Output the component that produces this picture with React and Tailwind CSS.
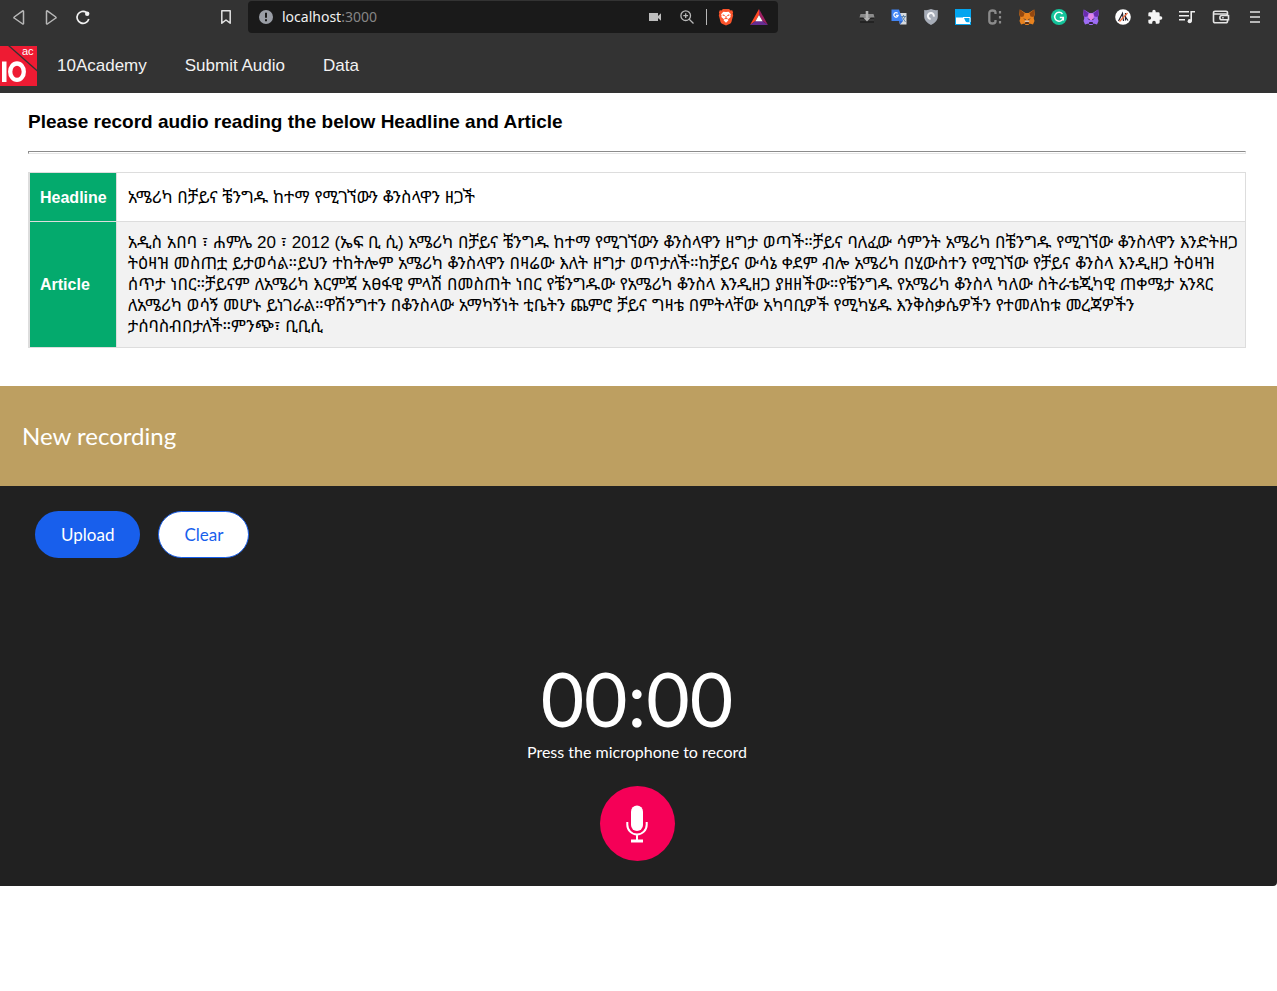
import React from "react";

const ICON = "block h-4 w-4";

function BackIcon() {
  return (
    <svg viewBox="0 0 16 16" className={ICON} fill="none" stroke="#b8b8b8" strokeWidth="1.5" strokeLinejoin="round">
      <path d="M12.5 2.3v12.4a.5.5 0 0 1-.8.3L3.2 9a.6.6 0 0 1 0-1l8.5-6.1a.5.5 0 0 1 .8.4z" />
    </svg>
  );
}

function ForwardIcon() {
  return (
    <svg viewBox="0 0 16 16" className={ICON} fill="none" stroke="#b8b8b8" strokeWidth="1.5" strokeLinejoin="round">
      <path d="M3.5 2.3v12.4a.5.5 0 0 0 .8.3L12.8 9a.6.6 0 0 0 0-1L4.3 1.9a.5.5 0 0 0-.8.4z" />
    </svg>
  );
}

function ReloadIcon() {
  return (
    <svg viewBox="0 0 16 16" className={ICON} fill="none">
      <path d="M11.5 3.4A6 6 0 1 0 13.8 10" stroke="#f2f2f2" strokeWidth="1.7" />
      <circle cx="12.200" cy="4.700" r="2.200" fill="#f2f2f2" />
    </svg>
  );
}

function BookmarkIcon() {
  return (
    <svg viewBox="0 0 16 16" className={ICON} fill="none" stroke="#e2e2e2" strokeWidth="1.5" strokeLinejoin="round">
      <path d="M3.8 1.800h8.400v12.400L8 11l-4.200 3.200z" />
    </svg>
  );
}

function InfoIcon() {
  return (
    <svg viewBox="0 0 16 16" className={ICON}>
      <circle cx="8" cy="8" r="7" fill="#9a9ea6" />
      <path d="M8 3.8v5M8 10.2v2" stroke="#1a1a1a" strokeWidth="2" />
    </svg>
  );
}

function CameraIcon() {
  return (
    <svg viewBox="0 0 16 16" className={ICON} fill="#bdbdbd">
      <path d="M2 4h9v3l3-2.700v7.400L11 9v3H2z" />
    </svg>
  );
}

function ZoomIcon() {
  return (
    <svg viewBox="0 0 16 16" className={ICON} fill="none" stroke="#b8b8b8" strokeWidth="1.300">
      <circle cx="6.700" cy="6.700" r="4.800" />
      <path d="M10.200 10.200l4.300 4.300M4.300 6.700h4.800M6.700 4.300v4.800" />
    </svg>
  );
}

function BraveIcon() {
  return (
    <svg viewBox="0 0 18 20" className="block h-[18px] w-4">
      <path d="M5.500 1h7l1.500 1.600 2-.1 1 2.500-.5 1.300.6 1.800-2 7.400c-.3.900-.8 1.400-1.600 2L9 19.500l-4.500-2c-.8-.6-1.300-1.100-1.600-2L.9 8.100l.6-1.800L1 5l1-2.500 2 .1z" fill="#fb542b" />
      <path d="M9 4.500l3-.5 2.500 3-.6 1.500.4 1.500-3 2.500.3 1.500L9 16.500 6.400 14l.3-1.500-3-2.500.4-1.500L3.500 7 6 4z" fill="#fff" />
      <path d="M5.200 7.500l2.300 1M12.800 7.500l-2.300 1M9 9v2.500M7.300 12.200L9 11.200l1.700 1" stroke="#fb542b" strokeWidth="1.200" fill="none" />
    </svg>
  );
}

function RewardsIcon() {
  return (
    <svg viewBox="0 0 18 16" className="block h-4 w-[18px]">
      <path d="M9 0v6L5.500 12 0 16z" fill="#ff4724" />
      <path d="M9 0l9 16-5.500-4L9 6z" fill="#9e1f63" />
      <path d="M0 16l5.500-4h7L18 16z" fill="#662d91" />
      <path d="M9 6l3.600 6.200H5.400z" fill="#fff" />
    </svg>
  );
}

function DownloadBoxIcon() {
  return (
    <svg viewBox="0 0 16 16" className={ICON}>
      <path d="M1.500 5h13l1 3.500H.5z" fill="#8c8c8c" />
      <path d="M1 8.500h14v5.500H1z" fill="#232323" />
      <path d="M1 8.500h14M1 11h14" stroke="#5c5c5c" strokeWidth=".8" />
      <path d="M6.700 2h2.600v6.500h2.400L8 12.500 4.300 8.500h2.400z" fill="#b4b4b4" />
    </svg>
  );
}

function TranslateIcon() {
  return (
    <svg viewBox="0 0 16 16" className={ICON}>
      <path d="M6 4h9.500v11.500H9z" fill="#d7dadd" />
      <path d="M10 7.500h5M12.500 6v1.500M11 8l3.500 5M14 8l-3 4" stroke="#6688a8" strokeWidth="1" />
      <path d="M.5.500H8L12 12H.5z" fill="#4285f4" />
      <path d="M8 12h4l-3 3.500z" fill="#3068ce" />
      <path d="M6.700 4.400a2.200 2.200 0 1 0 .5 2H5" stroke="#fff" strokeWidth="1.200" fill="none" />
    </svg>
  );
}

function ShieldIcon() {
  return (
    <svg viewBox="0 0 16 16" className={ICON}>
      <path d="M1.200 1Q5 1.500 8 0q3 1.500 6.800 1v7q0 4.500-6.800 8-6.800-3.500-6.800-8z" fill="#a7adb8" />
      <path d="M7.600 10A3 3 0 1 1 10.800 7.600" fill="none" stroke="#f5f6f8" strokeWidth="2" />
    </svg>
  );
}

function TabBlockIcon() {
  return (
    <svg viewBox="0 0 16 16" className={ICON}>
      <path d="M0 0h16v16H0z" fill="#03a5ef" />
      <path d="M1 8.500h7c2 0 1.800 4.800 4 4.800h3V15H1z" fill="#fff" />
      <path d="M8 8.500h7V13" fill="none" stroke="#fff" strokeWidth="1" />
    </svg>
  );
}

function CodeIcon() {
  return (
    <svg viewBox="0 0 16 16" className={ICON} fill="none" stroke="#8b8b8b">
      <path d="M8.500 5V3.700C8.500 2.200 7.500 1.500 5.500 1.500S2.300 2.300 2.300 4v8c0 1.700 1 2.500 3.200 2.500s3-.8 3-2.300V11" strokeWidth="2.300" />
      <path d="M13 2v2.500M13 7v2.500M13 12v2.500" strokeWidth="2.200" />
    </svg>
  );
}

function FoxOrangeIcon() {
  return (
    <svg viewBox="0 0 16 16" className={ICON}>
      <path d="M.8.500L6.500 4h3L15.200.500l.5 5-1 3.500.8 3-1.500 3.500-3.500-1L9.500 16h-3L5.500 14.500l-3.500 1L.5 12l.8-3-1-3.500z" fill="#e8821e" />
      <path d="M.8.500L5.500 4.300 4.500 7.500 1.500 8 .5 5.500zM15.200.500L10.500 4.300l1 3.200 3 .5 1-2.500z" fill="#944810" />
      <path d="M4 9.500l2.500.5.500 1.200zM12 9.500L9.500 10 9 11.200z" fill="#313840" />
      <path d="M6.300 13h3.400l.3 2H6z" fill="#5a3018" />
      <path d="M5.500 12l1-.5h3l1 .5-.5 1H6z" fill="#d7c2b3" />
    </svg>
  );
}

function FoxPurpleIcon() {
  return (
    <svg viewBox="0 0 16 16" className={ICON}>
      <path d="M.8.500L6.500 4h3L15.200.500l.5 5-1 3.500.8 3-1.500 3.500-3.500-1L9.500 16h-3L5.500 14.500l-3.500 1L.5 12l.8-3-1-3.500z" fill="#9d6cf5" />
      <path d="M.8.500L5.500 4.300 4.500 7.500 1.500 8 .5 5.500zM15.200.500L10.500 4.300l1 3.200 3 .5 1-2.500z" fill="#6a2bad" />
      <path d="M6 4.500h4l1 3-1.500 3.500h-3L5 7.500z" fill="#e285e6" />
      <path d="M4 9.500l2.500.5.500 1.200zM12 9.500L9.500 10 9 11.200zM6.300 13h3.400l.3 2H6z" fill="#30203f" />
    </svg>
  );
}

function GrammarIcon() {
  return (
    <svg viewBox="0 0 16 16" className={ICON}>
      <circle cx="8" cy="8" r="8" fill="#15c39a" />
      <path d="M11.500 5A4.400 4.400 0 1 0 12.300 9M8.800 8.600h3.500v2.800" stroke="#fff" strokeWidth="1.500" fill="none" />
    </svg>
  );
}

function AxeIcon() {
  return (
    <svg viewBox="0 0 16 16" className={ICON}>
      <circle cx="8" cy="8" r="7.800" fill="#fff" />
      <path d="M3.500 12L7.500 4.500 8.500 12M10.500 4v7.500M10.500 8l2.500 3.500" stroke="#22222e" strokeWidth="1.200" fill="none" />
      <path d="M4.500 12.500L12.500 4" stroke="#ee6b3b" strokeWidth="1.200" />
    </svg>
  );
}

function PuzzleIcon() {
  return (
    <svg viewBox="0 0 24 24" className="block h-4 w-4" fill="#f5f5f5">
      <path d="M20.500 11H19V7a2 2 0 0 0-2-2h-4V3.500a2.500 2.500 0 0 0-5 0V5H4a2 2 0 0 0-2 2v3.800h1.500a2.700 2.700 0 0 1 0 5.400H2V20a2 2 0 0 0 2 2h3.800v-1.500a2.700 2.700 0 0 1 5.400 0V22H17a2 2 0 0 0 2-2v-4h1.500a2.500 2.500 0 0 0 0-5z" />
    </svg>
  );
}

function PlaylistIcon() {
  return (
    <svg viewBox="0 0 18 16" className="block h-4 w-[18px]" fill="none" stroke="#eee" strokeWidth="1.600">
      <path d="M1 2.800h10M1 6.800h10M1 10.800h6M13.200 12.200V2.800H17" />
      <circle cx="11.700" cy="12.200" r="2.100" fill="#eee" stroke="none" />
    </svg>
  );
}

function WalletIcon() {
  return (
    <svg viewBox="0 0 18 16" className="block h-4 w-[18px]" fill="none" stroke="#e4e4e4" strokeWidth="1.600">
      <path d="M15.500 5V3.700A1.500 1.500 0 0 0 14 2.200H3a1.500 1.500 0 0 0-1.500 1.500v8.600A1.500 1.500 0 0 0 3 13.800h11a1.500 1.500 0 0 0 1.500-1.500V11M1.500 5H14a1.500 1.500 0 0 1 1.500 1.500" />
      <path d="M10 6.500h6.500v4.300H10a2.100 2.100 0 0 1 0-4.300z" />
      <path d="M10.200 8.700h1.500" />
    </svg>
  );
}

function MenuIcon() {
  return (
    <svg viewBox="0 0 16 16" className={ICON} stroke="#e4e4e4" strokeWidth="1.600">
      <path d="M3 3h10M3 8h10M3 13h10" />
    </svg>
  );
}

function MicIcon() {
  return (
    <svg viewBox="0 0 22 38" className="block h-[38px] w-[22px]">
      <rect x="5" y="0.500" width="12" height="25.500" rx="6" fill="#fff" />
      <path d="M1.300 17v2.800a9.700 9.700 0 0 0 19.400 0V17M11 29v6" stroke="#fff" strokeWidth="2" fill="none" />
      <path d="M5 34.500h12V37.500H5z" fill="#fff" />
    </svg>
  );
}

function Logo() {
  return (
    <svg viewBox="0 0 37 40" className="block h-10 w-[37px]" role="img" aria-label="10 Academy">
      <path d="M0 0h37v40H0z" fill="#ee1b33" />
      <path d="M8.500-.5L37.500 25" stroke="#333" strokeWidth="1.300" />
      <text x="22" y="9" fill="#fff" fontSize="11" className="leading-none [font-family:'Liberation_Sans',sans-serif]">ac</text>
      <path d="M2 15.500h4.500V36H2z" fill="#fff" />
      <ellipse cx="17" cy="25.700" rx="6.800" ry="8.200" fill="none" stroke="#fff" strokeWidth="4.300" />
    </svg>
  );
}

const extensions = [
  ["Download helper", DownloadBoxIcon],
  ["Translate", TranslateIcon],
  ["Privacy shield", ShieldIcon],
  ["Tab manager", TabBlockIcon],
  ["Code tools", CodeIcon],
  ["Wallet", FoxOrangeIcon],
  ["Grammar", GrammarIcon],
  ["Wallet beta", FoxPurpleIcon],
  ["Accessibility", AxeIcon],
  ["Extensions", PuzzleIcon],
  ["Media", PlaylistIcon],
];

function ToolButton({ label, wide, children }) {
  return (
    <button type="button" aria-label={label} className={`flex h-8 shrink-0 items-center justify-center ${wide ? "w-[34px]" : "w-8"}`}>
      {children}
    </button>
  );
}

function BrowserBar() {
  return (
    <div className="flex h-[38px] items-start justify-between bg-[#333333] pt-px pr-[5px] pl-[3px]">
      <div className="flex items-center">
        <ToolButton label="Back"><BackIcon /></ToolButton>
        <ToolButton label="Forward"><ForwardIcon /></ToolButton>
        <ToolButton label="Reload"><ReloadIcon /></ToolButton>
      </div>
      <div className="mr-[73px] ml-auto flex items-center gap-1.5">
        <ToolButton label="Bookmark this page"><BookmarkIcon /></ToolButton>
        <div className="flex h-8 w-[530px] items-center rounded bg-[#1a1a1a] pl-2.5">
          <InfoIcon />
          <div className="ml-2 flex-1 text-sm text-[#f0f0f0] [font-family:'Noto_Sans',sans-serif]">
            localhost<span className="text-[#858585]">:3000</span>
          </div>
          <ToolButton label="Camera"><CameraIcon /></ToolButton>
          <ToolButton label="Zoom"><ZoomIcon /></ToolButton>
          <div className="mx-[3px] h-4 w-px bg-[#b8b8b8]" />
          <ToolButton label="Shields"><BraveIcon /></ToolButton>
          <ToolButton label="Rewards" wide><RewardsIcon /></ToolButton>
          <div className="w-0.5" />
        </div>
      </div>
      <div className="flex items-center gap-px">
        <div className="flex items-center">
          {extensions.map(([label, Icon]) => (
            <ToolButton key={label} label={label}><Icon /></ToolButton>
          ))}
        </div>
        <div className="flex items-center">
          <ToolButton label="Crypto wallet" wide><WalletIcon /></ToolButton>
          <ToolButton label="Menu" wide><MenuIcon /></ToolButton>
        </div>
      </div>
    </div>
  );
}

function NavBar() {
  return (
    <nav className="flex h-[55px] items-center bg-[#333333] text-[17px] leading-5 text-[#f2f2f2]">
      <Logo />
      <div className="flex gap-[38px] pl-5">
        <a href="#home">10Academy</a>
        <a href="#submit">Submit Audio</a>
        <a href="#data">Data</a>
      </div>
    </nav>
  );
}

const headline = "አሜሪካ በቻይና ቼንግዱ ከተማ የሚገኘውን ቆንስላዋን ዘጋች";
const articleLines = [
  "አዲስ አበባ ፣ ሐምሌ 20 ፣ 2012 (ኤፍ ቢ ሲ) አሜሪካ በቻይና ቼንግዱ ከተማ የሚገኘውን ቆንስላዋን ዘግታ ወጣች።ቻይና ባለፈው ሳምንት አሜሪካ በቼንግዱ የሚገኘው ቆንስላዋን እንድትዘጋ",
  "ትዕዛዝ መስጠቷ ይታወሳል።ይህን ተከትሎም አሜሪካ ቆንስላዋን በዛሬው እለት ዘግታ ወጥታለች።ከቻይና ውሳኔ ቀደም ብሎ አሜሪካ በሂውስተን የሚገኘው የቻይና ቆንስላ እንዲዘጋ ትዕዛዝ",
  "ሰጥታ ነበር።ቻይናም ለአሜሪካ እርምጃ አፀፋዊ ምላሽ በመስጠት ነበር የቼንግዱው የአሜሪካ ቆንስላ እንዲዘጋ ያዘዘችው።የቼንግዱ የአሜሪካ ቆንስላ ካለው ስትራቴጂካዊ ጠቀሜታ አንጻር",
  "ለአሜሪካ ወሳኝ መሆኑ ይነገራል።ዋሽንግተን በቆንስላው አማካኝነት ቲቤትን ጨምሮ ቻይና ግዛቴ በምትላቸው አካባቢዎች የሚካሄዱ እንቅስቃሴዎችን የተመለከቱ መረጃዎችን",
  "ታሰባስብበታለች።ምንጭ፣ ቢቢሲ",
];

function Prompt() {
  return (
    <main className="pt-[17px] pr-[31px] pb-[38px] pl-7">
      <h1 className="text-[19px] leading-6 font-bold">Please record audio reading the below Headline and Article</h1>
      <hr className="mt-[17px] h-[3px] border border-t-[#8c8c8c] border-r-[#e6e6e6] border-b-[#e6e6e6] border-l-[#8c8c8c]" />
      <table className="mt-[18px] w-full border-collapse border border-l-2 border-[#dddddd] text-base leading-[21px] [font-family:'Liberation_Sans','Noto_Sans_Ethiopic','Abyssinica_SIL',sans-serif]">
        <tbody>
          <tr className="h-[49px] border-b border-[#dddddd]">
            <th scope="row" className="w-[86px] border-r border-[#dddddd] bg-[#04aa6d] pr-[9px] pl-2.5 text-left font-bold text-white">Headline</th>
            <td className="pr-1 pl-[11px] text-[17px] leading-[21px]">{headline}</td>
          </tr>
          <tr className="bg-[#f2f2f2]">
            <th scope="row" className="border-r border-[#dddddd] bg-[#04aa6d] pr-[9px] pl-2.5 text-left font-bold text-white">Article</th>
            <td className="py-2.5 pr-1 pl-[11px] text-[17px] leading-[21px]">
              {articleLines.map((line) => (
                <span key={line} className="block">{line}</span>
              ))}
            </td>
          </tr>
        </tbody>
      </table>
    </main>
  );
}

function Recorder() {
  return (
    <section className="overflow-hidden rounded-br bg-[#212121] text-white [font-family:Lato,sans-serif]">
      <header className="flex h-[100px] items-center bg-[#bd9f61] px-[22px]">
        <h2 className="text-2xl">New recording</h2>
      </header>
      <div className="flex gap-[18px] px-[35px] pt-[25px]">
        <button type="button" className="h-[47px] rounded-full bg-[#185fec] px-[26px] text-[17px]">Upload</button>
        <button type="button" className="h-[47px] rounded-full border border-[#185fec] bg-white px-[25px] text-[17px] text-[#185fec]">Clear</button>
      </div>
      <div className="flex flex-col items-center pt-24 pr-[3px] pb-[25px]">
        <div className="text-[75px] leading-[88px]">00:00</div>
        <p className="text-base leading-5">Press the microphone to record</p>
        <button type="button" aria-label="Start recording" className="mt-6 flex h-[75px] w-[75px] items-center justify-center rounded-full bg-[#f50057]">
          <MicIcon />
        </button>
      </div>
    </section>
  );
}

export default function App() {
  return (
    <div className="min-h-screen bg-white text-black [font-family:'Liberation_Sans',Arial,sans-serif]">
      <BrowserBar />
      <NavBar />
      <Prompt />
      <Recorder />
    </div>
  );
}
